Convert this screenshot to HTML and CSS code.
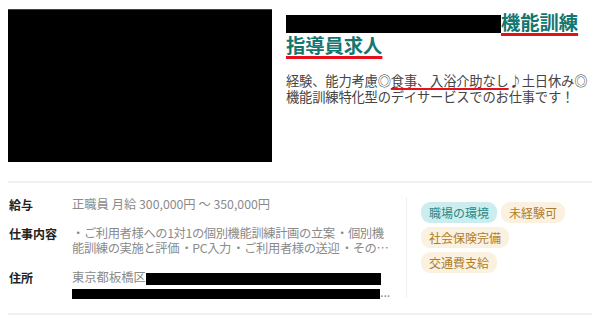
FILE: index.html
```html
<!DOCTYPE html>
<html lang="ja">
<head>
<meta charset="utf-8">
<title>求人</title>
<link rel="stylesheet" href="styles.css">
</head>
<body>
<div class="card">
  <div class="top">
    <div class="thumb"></div>
    <div class="info">
      <h2 class="title"><span class="title-redact"></span><span class="mark">機能訓練</span><span class="mark">指導員求人</span></h2>
      <p class="desc">経験、能力考慮◎<span class="mark-thin">食事、入浴介助なし</span>♪土日休み◎機能訓練特化型のデイサービスでのお仕事です！</p>
    </div>
  </div>
  <div class="details">
    <dl class="facts">
      <dt>給与</dt>
      <dd>正職員 月給 300,000円 ～ 350,000円</dd>
      <dt>仕事内容</dt>
      <dd class="clamp">・ご利用者様への1対1の個別機能訓練計画の立案 ・個別機能訓練の実施と評価 ・PC入力 ・ご利用者様の送迎 ・その他付随する業務全般</dd>
      <dt>住所</dt>
      <dd>東京都板橋区<span class="redact r1"></span><span class="redact r2"></span>...</dd>
    </dl>
    <div class="tags">
      <span class="tag teal">職場の環境</span>
      <span class="tag beige">未経験可</span>
      <span class="tag beige">社会保険完備</span>
      <span class="tag beige">交通費支給</span>
    </div>
  </div>
</div>
</body>
</html>
```
FILE: styles.css
```css
* { box-sizing: border-box; }
html, body { margin: 0; padding: 0; background: #fff; }
body {
  font-family: "Noto Sans CJK JP", "Open Sans", sans-serif;
  color: #444;
}
.card {
  width: 600px;
  padding: 9px 8px 0 8px;
}
.top {
  display: flex;
  gap: 14px;
}
.thumb {
  flex: 0 0 264px;
  height: 153px;
  background: #000;
  border-top: 1px solid #444;
}
.info {
  flex: 1;
  min-width: 0;
}
.title {
  margin: 2px 0 0 0;
  font-size: 19.3px;
  line-height: 23px;
  font-weight: 700;
  color: #13766f;
}
.title-redact {
  display: inline-block;
  width: 215px;
  height: 18px;
  background: #000;
  vertical-align: -3px;
}
.mark {
  text-decoration: underline;
  text-decoration-color: #e8111b;
  text-decoration-thickness: 3px;
  text-underline-offset: 3px;
}
.desc {
  margin: 16px -6px 0 0;
  font-size: 13.3px;
  line-height: 16px;
  letter-spacing: -0.2px;
  color: #444;
}
.mark-thin {
  text-decoration: underline;
  text-decoration-color: #e8111b;
  text-decoration-thickness: 2px;
  text-underline-offset: 2px;
}
.details {
  margin-top: 19px;
  display: flex;
  align-items: flex-start;
  border-top: 2px solid #f3f1ec;
  border-bottom: 2px solid #f3f1ec;
  padding: 14px 0 13px 0;
}
.facts {
  flex: 0 0 384px;
  margin: 0;
  display: grid;
  grid-template-columns: 64px 1fr;
  row-gap: 14px;
  line-height: 15px;
}
.facts dt {
  margin: 0;
  font-size: 12px;
  font-weight: 700;
  color: #222;
  padding-left: 1px;
}
.facts dd {
  margin: 0;
  font-size: 12.3px;
  color: #8a8a8a;
}
.clamp {
  display: -webkit-box;
  -webkit-line-clamp: 2;
  -webkit-box-orient: vertical;
  overflow: hidden;
  letter-spacing: -0.4px;
  word-spacing: -1px;
}
.redact {
  display: inline-block;
  background: #000;
  vertical-align: middle;
}
.r1 { width: 235px; height: 12px; }
.r2 { width: 308px; height: 10px; }
.tags {
  margin-left: 14px;
  border-left: 1px solid #f0efec;
  padding: 5px 0 0 14px;
  width: 189px;
  height: 101px;
  display: flex;
  flex-wrap: wrap;
  align-content: flex-start;
  gap: 4px 4px;
  padding-right: 15px;
}
.tag {
  display: inline-block;
  font-size: 12px;
  line-height: 21px;
  height: 21px;
  padding: 0 8px;
  border-radius: 9px;
}
.teal { background: #ccedee; color: #2f8784; }
.beige { background: #fbf1e0; color: #ad7c2a; }
```
